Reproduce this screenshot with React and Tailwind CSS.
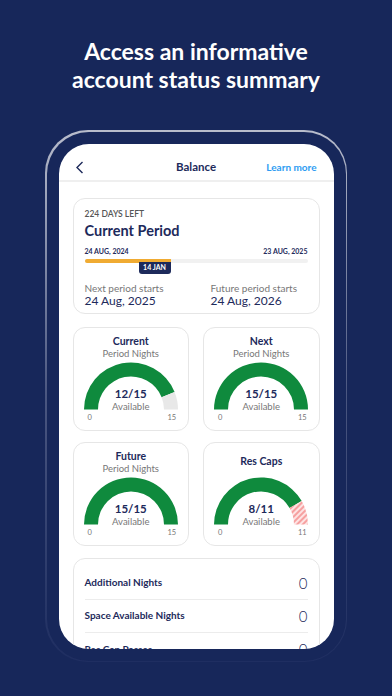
import React from "react";

function P(cx, cy, rad, deg) {
  const a = (deg * Math.PI) / 180;
  return [cx + rad * Math.cos(a), cy - rad * Math.sin(a)];
}
function arc(cx, cy, R, r, a0, a1) {
  const [x1, y1] = P(cx, cy, R, a0);
  const [x2, y2] = P(cx, cy, R, a1);
  const [x3, y3] = P(cx, cy, r, a1);
  const [x4, y4] = P(cx, cy, r, a0);
  return `M${x1} ${y1} A${R} ${R} 0 0 1 ${x2} ${y2} L${x3} ${y3} A${r} ${r} 0 0 0 ${x4} ${y4} Z`;
}

function Gauge({ title, subtitle, value, total, split, rest }) {
  const cx = 48, cy = 47.5, R = 47, r = 33;
  return (
    <div className="h-[104px] rounded-[12px] border border-[#e6e6e6] bg-white pt-[7px]">
      <div className="flex h-[24px] flex-col items-center justify-center">
        <div className="text-[10.5px] font-bold leading-[13px] text-[#1d2a5b]">{title}</div>
        {subtitle && (
          <div className="text-[9.5px] leading-[11px] text-[#777]">{subtitle}</div>
        )}
      </div>
      <div className="relative mx-auto mt-[3px] h-[48px] w-[96px]">
        <svg width="96" height="48" viewBox="0 0 96 48" className="block">
          <defs>
            <pattern id="hatch" width="4" height="4" patternUnits="userSpaceOnUse" patternTransform="rotate(45)">
              <rect width="4" height="4" fill="#fde3e3" />
              <rect width="2" height="4" fill="#f6a0a0" />
            </pattern>
          </defs>
          <path d={arc(cx, cy, R, r, 180, split)} fill="#0f8a3d" />
          {split > 0 && (
            <path d={arc(cx, cy, R, r, split, 0)} fill={rest === "hatch" ? "url(#hatch)" : "#e8e8e8"} />
          )}
        </svg>
        <div className="absolute inset-x-0 top-[25px] flex flex-col items-center">
          <div className="text-[11.5px] font-bold leading-[14px] text-[#1d2a5b]">{value}/{total}</div>
          <div className="text-[9.5px] leading-[12px] text-[#777]">Available</div>
        </div>
      </div>
      <div className="mx-auto mt-[3px] flex w-[96px] justify-between text-[7.5px] leading-[10px] text-[#777]">
        <span className="w-[14px] text-center">0</span>
        <span className="w-[14px] text-center">{total}</span>
      </div>
    </div>
  );
}

function Row({ label, value, last }) {
  return (
    <div className={"flex h-[33px] items-center justify-between " + (last ? "" : "border-b border-[#ececec]")}>
      <span className="text-[10px] font-bold text-[#1d2a5b]">{label}</span>
      <span className="text-[15px] font-light leading-[16px] text-[#1d2a5b]">{value}</span>
    </div>
  );
}

export default function App() {
  return (
    <div className="h-[696px] w-[392px] overflow-hidden bg-[#17275a] font-['Lato',sans-serif]">
      <h1 className="pt-[37px] text-center text-[23px] font-bold leading-[28px] text-white">
        Access an informative
        <br />
        account status summary
      </h1>
      <div className="ml-[45px] mt-[37px] h-[532px] w-[302px] rounded-[43px] bg-gradient-to-b from-[#b9bdcc] via-[#4a5680] to-[#1f2e61] p-[1.5px]">
        <div className="h-full w-full rounded-[42px] bg-[#17275a] p-[12px]">
          <div className="h-full w-full overflow-hidden rounded-[30px] bg-white">
            {/* header */}
            <div className="relative flex h-[38px] items-end justify-center border-b-2 border-[#efefef] pb-[4px]">
              <svg className="absolute left-[16px] top-[17px]" width="9" height="13" viewBox="0 0 9 13">
                <path d="M7.5 1 L2 6.5 L7.5 12" fill="none" stroke="#1d2a5b" strokeWidth="1.4" />
              </svg>
              <span className="text-[11.5px] font-bold leading-[18px] text-[#1d2a5b]">Balance</span>
              <span className="absolute right-[17px] top-[15px] text-[10px] font-bold leading-[16px] text-[#2e9cf2]">
                Learn more
              </span>
            </div>

            <div className="px-[14px] pt-[16px]">
              {/* current period */}
              <div className="h-[116px] rounded-[12px] border border-[#e6e6e6] px-[11px] pt-[10px]">
                <div className="text-[8.5px] font-semibold uppercase leading-[11px] text-[#555]">224 days left</div>
                <div className="mt-[1px] text-[14.5px] font-bold leading-[19px] text-[#1d2a5b]">Current Period</div>
                <div className="mt-[6px] flex justify-between text-[7px] font-bold leading-[10px] text-[#1d2a5b]">
                  <span>24 AUG, 2024</span>
                  <span>23 AUG, 2025</span>
                </div>
                <div className="relative mt-[3px] h-[4px] rounded-full bg-[#f1f1f1]">
                  <div className="absolute left-0 top-0 h-[4px] w-[86px] rounded-l-full bg-[#f0ab32]" />
                  <div className="absolute left-[54px] top-[3px] flex h-[12px] w-[32px] items-center justify-center rounded-b-[3px] bg-[#1d2a5b] text-[7px] font-bold text-white">
                    14 JAN
                  </div>
                </div>
                <div className="mt-[19px] flex">
                  <div className="w-[126px]">
                    <div className="text-[10px] leading-[12px] text-[#777]">Next period starts</div>
                    <div className="text-[12px] leading-[14px] text-[#1d2a5b]">24 Aug, 2025</div>
                  </div>
                  <div>
                    <div className="text-[10px] leading-[12px] text-[#777]">Future period starts</div>
                    <div className="text-[12px] leading-[14px] text-[#1d2a5b]">24 Aug, 2026</div>
                  </div>
                </div>
              </div>

              <div className="mt-[13px] grid grid-cols-2 gap-x-[14px] gap-y-[11px]">
                <Gauge title="Current" subtitle="Period Nights" value={12} total={15} split={22} rest="grey" />
                <Gauge title="Next" subtitle="Period Nights" value={15} total={15} split={0} />
                <Gauge title="Future" subtitle="Period Nights" value={15} total={15} split={0} />
                <Gauge title="Res Caps" value={8} total={11} split={30} rest="hatch" />
              </div>

              <div className="mt-[12px] rounded-[12px] border border-[#e6e6e6] px-[11px] pt-[8px]">
                <Row label="Additional Nights" value="0" />
                <Row label="Space Available Nights" value="0" />
                <Row label="Res Cap Passes" value="0" last />
              </div>
            </div>
          </div>
        </div>
      </div>
    </div>
  );
}
